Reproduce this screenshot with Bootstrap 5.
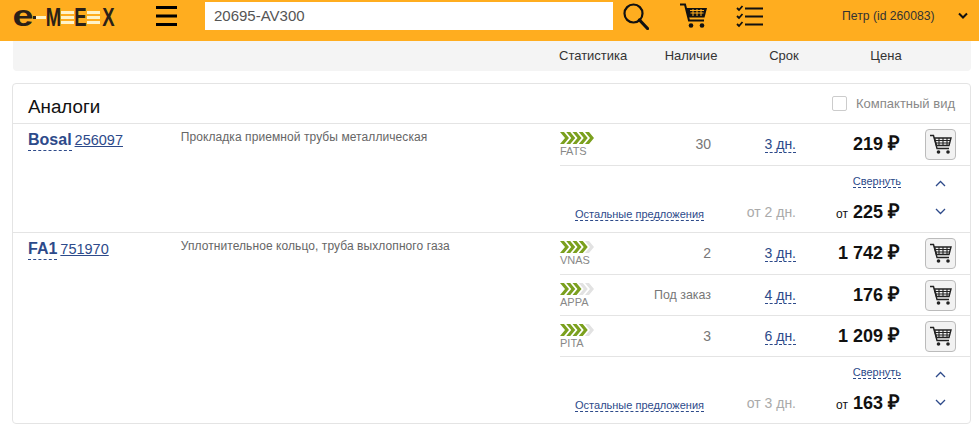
<!DOCTYPE html>
<html lang="ru">
<head>
  <meta charset="UTF-8" />
  <meta name="viewport" content="width=device-width, initial-scale=1" />
  <title>Аналоги - EMEX</title>
  <link href="https://cdn.jsdelivr.net/npm/bootstrap@5.3.0/dist/css/bootstrap.min.css" rel="stylesheet" />
  <style>
    body { font-family: "Liberation Sans", Arial, sans-serif; font-size: 14px; color: #333; background: #fff; }
    a { color: #2d4a8a; }
    .top-bar { height: 41px; padding-bottom: 9px; background: #ffad1f; }
    .logo-box { width: 104px; margin-left: 13px; height: 18px; margin-top: 2px; color: #2b2118; font-weight: 700; line-height: 18px; }
    .logo-e { font-size: 29px; line-height: 29px; height: 29px; margin-top: -6px; width: 20px; display: block; text-align: center; transform: scaleX(1.3); }
    .logo-letter { font-size: 25px; display: block; text-align: center; transform: scaleX(.74); }
    .letter-m { width: 21px; margin: 0 -3px; }
    .letter-e { width: 17px; margin: 0 -2px; }
    .letter-x { width: 17px; }
    .logo-dash { width: 13px; height: 3px; margin-top: 8px; background: linear-gradient(90deg, #2b2118 0 3px, #fff3c9 3px); }
    .logo-lines { width: 13px; height: 13px; margin-top: 3px; background: repeating-linear-gradient(180deg, #fff3c9 0 3px, transparent 3px 5px); }
    .logo-link { height: 18px; }
    .menu-btn { margin-left: 39px; }
    .search-input { width: 408px; height: 28px; margin-left: 28px; background: #fff; padding: 0 9px; line-height: 27px; color: #555; font-size: 15px; }
    .search-icon { margin-left: 10px; }
    .cart-icon { margin-left: 31px; }
    .list-icon { margin-left: 28px; }
    .user-name { margin-left: 79px; width: 94px; font-size: 12.2px; color: #333; white-space: nowrap; }
    .user-arrow { margin-left: 22px; }
    .columns-strip { height: 30px; margin: 0 8px 0 13px; background: #f4f4f4; border-radius: 0 0 4px 4px; font-size: 13px; color: #333; line-height: 29px; }
    .strip-stat { margin-left: 546px; width: 72px; white-space: nowrap; }
    .strip-stock { margin-left: 30px; width: 60px; text-align: center; }
    .strip-term { margin-left: 43px; width: 40px; text-align: center; }
    .strip-price { margin-left: 62px; width: 40px; text-align: center; }
    .result-card { margin: 12px 8px 0 12px; border: 1px solid #e4e4e4; border-radius: 4px; height: 341px; overflow: hidden; }
    .card-head { height: 40px; padding: 0 15px; border-bottom: 1px solid #e4e4e4; }
    .card-title-text { font-size: 18.800px; color: #111; margin-top: 8px; }
    .compact-box { width: 15px; height: 15px; border: 1px solid #ccc; border-radius: 2px; background: #fff; margin-right: 9px; }
    .compact-label { font-size: 13px; color: #888; margin-top: 1px; }
    .brand-group { border-bottom: 1px solid #e4e4e4; }
    .brand-group:last-child { border-bottom: 0; }
    .brand-col { width: 168px; padding: 6px 0 0 15px; white-space: nowrap; line-height: 20px; }
    .brand-name { font-size: 16px; font-weight: 700; color: #2d4a8a; text-decoration: none; border-bottom: 1px dashed #2d4a8a; display: inline-block; line-height: 18px; padding-bottom: 1px; }
    .part-num { font-size: 14.500px; color: #2d4a8a; margin-left: 3px; }
    .desc-col { width: 380px; padding-top: 4px; font-size: 12px; letter-spacing: .08px; color: #666; line-height: 18px; }
    .offers-col { width: 410px; }
    .offer-row { display: grid; grid-template-columns: 61px 90px 85px 104px 31px; height: 41px; border-bottom: 1px solid #e4e4e4; align-items: center; }
    .offer-row > .cart-btn { margin-left: 25px; }
    .offer-row.first-row { height: 42px; }
    .src-cell { font-size: 11px; color: #888; line-height: 11px; }
    .src-cell svg { display: block; margin-bottom: 2px; }
    .stock-cell { text-align: right; color: #777; font-size: 14px; }
    .stock-cell.small-text { font-size: 12.400px; }
    .term-cell { text-align: right; font-size: 14px; }
    .dash-link { color: #2d4a8a; text-decoration: none; border-bottom: 1px dashed #2d4a8a; }
    .price-cell { text-align: right; font-size: 18px; line-height: 20px; font-weight: 700; color: #111; white-space: nowrap; padding-bottom: 2px; }
    .rub-sign { font-size: 20px; }
    .cart-btn { width: 31px; height: 31px; padding: 0; background: #f2f2f2; border: 1px solid #bbb; border-radius: 4px; display: flex; align-items: center; justify-content: center; }
    .more-block { height: 66px; }
    .collapse-line { display: grid; grid-template-columns: 341px 69px; height: 31px; align-items: center; font-size: 11px; }
    .collapse-line .link-side { text-align: right; }
    .collapse-line .arrow-side { padding-left: 34px; margin-top: 4px; }
    .arrow-side svg { display: block; }
    .rest-line { display: grid; grid-template-columns: 144px 92px 104px 70px; height: 34px; align-items: center; }
    .rest-line .arrow-side { padding-left: 35px; padding-bottom: 6px; }
    .rest-link { font-size: 11px; text-align: right; white-space: nowrap; }
    .rest-term { text-align: right; color: #aaa; font-size: 14px; padding-bottom: 4px; }
    .rest-price { text-align: right; font-size: 18px; line-height: 20px; font-weight: 700; color: #111; white-space: nowrap; padding-bottom: 4px; }
    .rest-price small { font-size: 12px; font-weight: 400; }
  </style>
</head>
<body>
  <!-- верхняя панель -->
  <div class="top-bar d-flex align-items-center">
    <div class="logo-box">
      <a class="logo-link d-flex text-reset text-decoration-none" href="#">
        <span class="logo-e">e</span><span class="logo-dash"></span><span class="logo-letter letter-m">M</span><span class="logo-lines"></span><span class="logo-letter letter-e">E</span><span class="logo-lines"></span><span class="logo-letter letter-x">X</span>
      </a>
    </div>
    <a class="menu-btn d-block" href="#">
      <svg width="21" height="20" viewBox="0 0 21 20" class="d-block"><path d="M0 1.500h21M0 10h21M0 18.500h21" stroke="#000" stroke-width="3"/></svg>
    </a>
    <div class="search-input">20695-AV300</div>
    <svg class="search-icon" width="26" height="27" viewBox="0 0 26 27"><circle cx="10.500" cy="10.500" r="9" fill="none" stroke="#111" stroke-width="2.200"/><path d="M16.500 17l8 8.500" stroke="#111" stroke-width="3.200" stroke-linecap="round"/></svg>
    <svg class="cart-icon" width="28" height="26" viewBox="0 0 28 26"><path d="M0 1.500h5l4 16h15" fill="none" stroke="#111" stroke-width="2"/><path d="M6 5h21l-2.500 9.500H8.500z" fill="#111"/><path d="M10 7.500h14M10.500 10h13M13 6v7M17 6v7M21 6v7" stroke="#ffad1f" stroke-width="1"/><circle cx="11" cy="22.500" r="2.300" fill="#111"/><circle cx="22" cy="22.500" r="2.300" fill="#111"/></svg>
    <svg class="list-icon" width="27" height="23" viewBox="0 0 27 23"><path d="M1 3l2 2 3.500-4M1 11l2 2 3.500-4M1 19l2 2 3.500-4" fill="none" stroke="#111" stroke-width="1.800"/><path d="M9 3.500h18M9 11.500h18M9 19.500h18" stroke="#111" stroke-width="2.200"/></svg>
    <div class="user-name">Петр (id 260083)</div>
    <svg class="user-arrow" width="10" height="8" viewBox="0 0 10 8"><path d="M1 1.500l4 4 4-4" fill="none" stroke="#111" stroke-width="2"/></svg>
  </div>

  <div class="columns-strip d-flex">
    <div class="strip-stat">Статистика</div>
    <div class="strip-stock">Наличие</div>
    <div class="strip-term">Срок</div>
    <div class="strip-price">Цена</div>
  </div>

  <div class="result-card">
    <div class="card-head d-flex align-items-center justify-content-between">
      <div class="card-title-text">Аналоги</div>
      <div class="d-flex align-items-center">
        <span class="compact-box"></span>
        <span class="compact-label">Компактный вид</span>
      </div>
    </div>
    <div id="groups"></div>
  </div>

  <script src="https://cdn.jsdelivr.net/npm/bootstrap@5.3.0/dist/js/bootstrap.bundle.min.js"></script>
  <script>
    const groups = [
      { brand: 'Bosal', num: '256097', desc: 'Прокладка приемной трубы металлическая', term: '2', price: '225',
        offers: [{ src: 'FATS', level: 5, stock: '30', term: '3', price: '219' }] },
      { brand: 'FA1', num: '751970', desc: 'Уплотнительное кольцо, труба выхлопного газа', term: '3', price: '163',
        offers: [
          { src: 'VNAS', level: 4, stock: '2', term: '3', price: '1 742' },
          { src: 'APPA', level: 3, stock: 'Под заказ', term: '4', price: '176', small: true },
          { src: 'PITA', level: 4, stock: '3', term: '6', price: '1 209' }
        ] }
    ];

    function chevrons(level) {
      let s = '<svg width="34" height="12" viewBox="0 0 34 12">';
      for (let i = 0; i < 5; i++) {
        const x = i * 6.25;
        const c = i < level ? '#7ba01e' : '#e2e2e2';
        s += `<path d="M${x} 0h4l5 6-5 6h-4l5-6z" fill="${c}"/>`;
      }
      return s + '</svg>';
    }

    const cartSvg = '<svg width="22" height="21" viewBox="0 0 22 21"><path d="M0 1.500h3.500l3.500 13h12" fill="none" stroke="#222" stroke-width="1.400"/><path d="M4.500 4h16.500l-2 7.500H6.500z" fill="none" stroke="#222" stroke-width="1.400"/><path d="M5 6.500h15M5.500 9h14M9 4v7M13 4v7M17 4v7" stroke="#222" stroke-width="1.100"/><circle cx="8.500" cy="18" r="1.800" fill="#222"/><circle cx="18" cy="18" r="1.800" fill="#222"/></svg>';

    document.getElementById('groups').innerHTML = groups.map(g => `
      <div class="brand-group d-flex">
        <div class="brand-col"><a class="brand-name" href="#">${g.brand}</a><a class="part-num" href="#">${g.num}</a></div>
        <div class="desc-col">${g.desc}</div>
        <div class="offers-col">
          ${g.offers.map((o, i) => `
            <div class="offer-row ${i === 0 ? 'first-row' : ''}">
              <div class="src-cell">${chevrons(o.level)}${o.src}</div>
              <div class="stock-cell ${o.small ? 'small-text' : ''}">${o.stock}</div>
              <div class="term-cell"><a class="dash-link" href="#">${o.term} дн.</a></div>
              <div class="price-cell">${o.price} <span class="rub-sign">₽</span></div>
              <button class="cart-btn" type="button">${cartSvg}</button>
            </div>`).join('')}
          <div class="more-block">
            <div class="collapse-line">
              <div class="link-side"><a class="dash-link" href="#">Свернуть</a></div>
              <div class="arrow-side"><svg width="11" height="7" viewBox="0 0 11 7"><path d="M1 6l4.500-4.500L10 6" fill="none" stroke="#2d4a8a" stroke-width="1.300"/></svg></div>
            </div>
            <div class="rest-line">
              <div class="rest-link"><a class="dash-link" href="#">Остальные предложения</a></div>
              <div class="rest-term">от ${g.term} дн.</div>
              <div class="rest-price"><small>от</small> ${g.price} <span class="rub-sign">₽</span></div>
              <div class="arrow-side"><svg width="11" height="7" viewBox="0 0 11 7"><path d="M1 1l4.500 4.500L10 1" fill="none" stroke="#2d4a8a" stroke-width="1.300"/></svg></div>
            </div>
          </div>
        </div>
      </div>`).join('');
  </script>
</body>
</html>
